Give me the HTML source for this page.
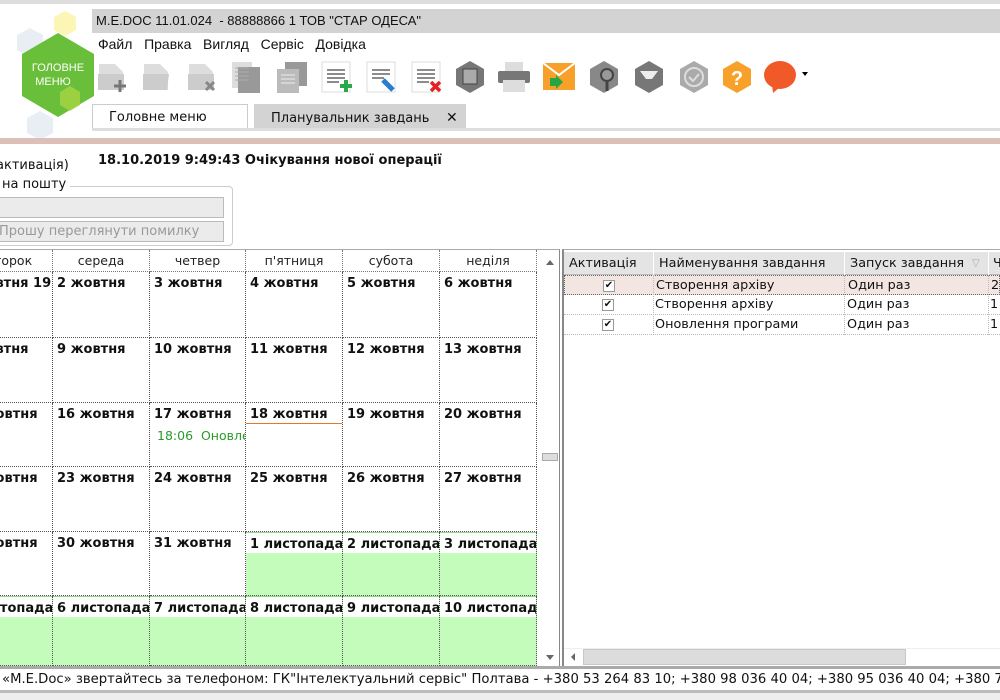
<!DOCTYPE html>
<html><head><meta charset="utf-8">
<style>
*{margin:0;padding:0;box-sizing:border-box}
body{width:1000px;height:700px;position:relative;overflow:hidden;background:#fff;font-family:"DejaVu Sans","Liberation Sans",sans-serif;font-size:12px;color:#111}
.a{position:absolute}
.ico{position:absolute;top:60px;width:34px;height:34px}
.hd{position:absolute;top:250px;height:22px;border-right:1px dotted #777;border-bottom:1px dotted #777;text-align:center;line-height:22px;font-size:12.5px;color:#222}
.c{position:absolute;border-right:1px dotted #555;border-bottom:1px dotted #555;overflow:hidden}
.c b{display:block;height:21px;padding:4px 0 0 4px;font-size:13px;white-space:nowrap;background:#fff}
.g{background:#c3fcbb}
.g b{border-top:1px solid #8fd88a}
.tr{position:absolute;left:564px;width:436px;height:20px;border-bottom:1px dotted #bbb;font-size:12.8px;line-height:19px}
.tr span{position:absolute;top:0}
.chk{position:absolute;left:38px;top:4px;width:12px;height:12px;border:1px solid #999;background:#fff;font-size:10px;line-height:10px;text-align:center;font-weight:bold}
</style></head><body>
<div class="a" style="left:0;top:0;width:1000px;height:4px;background:#ddd"></div>
<svg class="a" style="left:10px;top:8px" width="85" height="135" viewBox="0 0 85 135">
<polygon points="55,3 66,9 66,22 55,28 44,22 44,9" fill="#fbf5b6"/>
<polygon points="20,20 33,27 33,42 20,49 7,42 7,27" fill="#e9eef4"/>
<polygon points="30,103 43,110 43,125 30,132 17,125 17,110" fill="#e9eef4"/>
<polygon points="48,25 84,46 84,88 48,109 12,88 12,46" fill="#6abf3a"/>
<polygon points="60,78 70,84 70,97 60,103 50,97 50,84" fill="#a8d444" opacity=".8"/>
<text x="48" y="63" text-anchor="middle" fill="#fff" font-family="Liberation Sans" font-size="11">ГОЛОВНЕ</text>
<text x="43" y="77" text-anchor="middle" fill="#fff" font-family="Liberation Sans" font-size="11">МЕНЮ</text>
</svg>
<div class="a" style="left:92px;top:9px;width:908px;height:24px;background:#d3d3d3;font-family:'Liberation Sans';font-size:13px;line-height:24px;padding-left:4px">M.E.DOC 11.01.024&nbsp; - 88888866 1 ТОВ "СТАР ОДЕСА"</div>
<div class="a" style="left:98px;top:36px;font-family:'Liberation Sans';font-size:14px;word-spacing:0">Файл&nbsp;&nbsp; Правка&nbsp;&nbsp; Вигляд&nbsp;&nbsp; Сервіс&nbsp;&nbsp; Довідка</div>
<svg class="ico" style="left:96px" viewBox="0 0 34 34"><path d="M3 4h16l8 8v18H3z" fill="#ddd"/><path d="M2 14h26v16H2z" fill="#ccc"/><path d="M24 20v12M18 26h12" stroke="#777" stroke-width="3"/></svg>
<svg class="ico" style="left:141px" viewBox="0 0 34 34"><path d="M3 4h16l8 8v18H3z" fill="#ddd"/><path d="M2 14h26l-2 16H2z" fill="#ccc"/></svg>
<svg class="ico" style="left:186px" viewBox="0 0 34 34"><path d="M3 4h16l8 8v18H3z" fill="#ddd"/><path d="M2 14h26v16H2z" fill="#ccc"/><path d="M20 22l8 8M28 22l-8 8" stroke="#888" stroke-width="3"/></svg>
<svg class="ico" style="left:230px" viewBox="0 0 34 34"><rect x="2" y="2" width="20" height="26" fill="#ddd"/><rect x="8" y="7" width="22" height="26" fill="#999"/><path d="M5 8h14M5 12h14M5 16h14M5 20h14" stroke="#aaa"/></svg>
<svg class="ico" style="left:275px" viewBox="0 0 34 34"><rect x="10" y="2" width="22" height="24" fill="#999"/><rect x="2" y="9" width="22" height="24" fill="#bbb"/><path d="M6 15h14M6 19h14M6 23h14" stroke="#eee"/></svg>
<svg class="ico" style="left:320px" viewBox="0 0 34 34"><rect x="2" y="2" width="28" height="30" fill="#fff" stroke="#ddd"/><path d="M7 10h18M7 14h18M7 18h18M7 22h12" stroke="#666" stroke-width="1.5"/><path d="M26 20v12M20 26h12" stroke="#2aa84a" stroke-width="4"/></svg>
<svg class="ico" style="left:365px" viewBox="0 0 34 34"><rect x="2" y="2" width="28" height="30" fill="#fff" stroke="#ddd"/><path d="M7 10h18M7 14h18M7 18h12" stroke="#666" stroke-width="1.5"/><path d="M18 20l10 10" stroke="#2b7ecf" stroke-width="5"/></svg>
<svg class="ico" style="left:410px" viewBox="0 0 34 34"><rect x="2" y="2" width="28" height="30" fill="#fff" stroke="#ddd"/><path d="M7 10h18M7 14h18M7 18h18M7 22h12" stroke="#666" stroke-width="1.5"/><path d="M21 22l9 9M30 22l-9 9" stroke="#e52222" stroke-width="3.5"/></svg>
<svg class="ico" style="left:453px" viewBox="0 0 34 34"><polygon points="17,1 31,9 31,25 17,33 3,25 3,9" fill="#777"/><rect x="10" y="9" width="14" height="15" fill="#aaa" stroke="#444"/></svg>
<svg class="ico" style="left:497px" viewBox="0 0 34 34"><rect x="8" y="2" width="18" height="10" fill="#ddd"/><rect x="1" y="11" width="32" height="12" rx="2" fill="#777"/><rect x="6" y="20" width="22" height="12" fill="#ddd"/></svg>
<svg class="ico" style="left:542px" viewBox="0 0 34 34"><rect x="1" y="3" width="32" height="27" fill="#f7a12a"/><path d="M1 3l16 12 16-12" stroke="#fff" stroke-width="2" fill="none"/><path d="M8 18l6 0 0-3 7 7-7 7 0-3-6 0z" fill="#27a545"/></svg>
<svg class="ico" style="left:587px" viewBox="0 0 34 34"><polygon points="17,1 31,9 31,25 17,33 3,25 3,9" fill="#888"/><circle cx="20" cy="15" r="6" fill="#999" stroke="#444" stroke-width="2"/><path d="M20 21v10" stroke="#444" stroke-width="3"/></svg>
<svg class="ico" style="left:632px" viewBox="0 0 34 34"><polygon points="17,1 31,9 31,25 17,33 3,25 3,9" fill="#777"/><path d="M8 11h18l-6 8H14z" fill="#eee"/></svg>
<svg class="ico" style="left:677px" viewBox="0 0 34 34"><polygon points="17,1 31,9 31,25 17,33 3,25 3,9" fill="#aaa"/><circle cx="17" cy="17" r="9" fill="none" stroke="#ddd" stroke-width="2"/><path d="M12 17l4 4 6-7" stroke="#ddd" stroke-width="2" fill="none"/></svg>
<svg class="ico" style="left:720px" viewBox="0 0 34 34"><polygon points="17,1 31,9 31,25 17,33 3,25 3,9" fill="#f7a12a"/><text x="17" y="25" text-anchor="middle" fill="#fff" font-weight="bold" font-size="20" font-family="Liberation Sans">?</text></svg>
<svg class="ico" style="left:763px" viewBox="0 0 34 34"><ellipse cx="17" cy="15" rx="16" ry="14" fill="#f05a28"/><path d="M9 25l1 8 7-6z" fill="#f05a28"/></svg>
<div class="a" style="left:802px;top:72px;width:0;height:0;border-left:3px solid transparent;border-right:3px solid transparent;border-top:4px solid #000"></div>
<div class="a" style="left:92px;top:104px;width:156px;height:25px;border:1px solid #ccc;border-bottom:none;font-size:13px;line-height:26px;padding-left:16px">Головне меню</div>
<div class="a" style="left:254px;top:104px;width:212px;height:25px;background:#d3d3d3;font-size:13px;line-height:28px;padding-left:17px">Планувальник завдань&nbsp;&nbsp;&nbsp; <span style="font-size:14px">✕</span></div>
<div class="a" style="left:92px;top:128px;width:908px;height:3px;background:#ddd"></div>
<div class="a" style="left:0;top:138px;width:1000px;height:6px;background:#dcbfb7"></div>
<div class="a" style="left:-4px;top:158px;font-size:13px">активація)</div>
<div class="a" style="left:98px;top:153px;font-size:13px;font-weight:bold">18.10.2019 9:49:43 Очікування нової операції</div>
<div class="a" style="left:-10px;top:186px;width:243px;height:60px;border:1px solid #ccc;border-radius:4px"></div>
<div class="a" style="left:-2px;top:177px;background:#fff;font-size:13px;padding:0 4px">на пошту</div>
<div class="a" style="left:-2px;top:197px;width:226px;height:21px;background:#ebebeb;border:1px solid #bbb"></div>
<div class="a" style="left:-2px;top:221px;width:226px;height:21px;background:#ebebeb;border:1px solid #bbb;color:#999;font-size:13px;line-height:19px">Прошу переглянути помилку</div>
<div class="a" style="left:0;top:249px;width:560px;height:418px;border-top:1px solid #aaa;border-right:1px solid #888"></div>
<div class="hd" style="left:-44px;width:97px">вівторок</div>
<div class="hd" style="left:53px;width:97px">середа</div>
<div class="hd" style="left:150px;width:96px">четвер</div>
<div class="hd" style="left:246px;width:97px">п'ятниця</div>
<div class="hd" style="left:343px;width:97px">субота</div>
<div class="hd" style="left:440px;width:97px">неділя</div>
<div id="cal"></div>
<div class="a" style="left:540px;top:250px;width:19px;height:416px;background:#fff"></div>
<div class="a" style="left:546px;top:260px;border-left:4px solid transparent;border-right:4px solid transparent;border-bottom:5px solid #666"></div>
<div class="a" style="left:546px;top:655px;border-left:4px solid transparent;border-right:4px solid transparent;border-top:5px solid #666"></div>
<div class="a" style="left:542px;top:453px;width:16px;height:8px;background:#ddd;border:1px solid #aaa"></div>
<div class="a" style="left:562px;top:249px;width:438px;height:418px;border-left:2px solid #888;border-top:1px solid #aaa"></div>
<div class="a" style="left:564px;top:252px;width:436px;height:23px;background:#e4e4e4;border-bottom:1px solid #bbb;font-size:12.8px;line-height:23px">
<span class="a" style="left:5px">Активація</span><span class="a" style="left:89px;top:0;height:23px;border-left:1px solid #fff"></span>
<span class="a" style="left:95px">Найменування завдання</span><span class="a" style="left:280px;top:0;height:23px;border-left:1px solid #fff"></span>
<span class="a" style="left:286px">Запуск завдання</span><span class="a" style="left:408px;color:#aaa;font-size:10px">▽</span><span class="a" style="left:424px;top:0;height:23px;border-left:1px solid #fff"></span>
<span class="a" style="left:429px">Ч</span></div>
<div class="tr" style="top:275px;background:#f3e5e2;border:1px dotted #666"><div class="chk">✔</div><span style="left:91px">Створення архіву</span><span style="left:283px">Один раз</span><span style="left:426px">2</span></div>
<div class="tr" style="top:295px"><div class="chk">✔</div><span style="left:91px">Створення архіву</span><span style="left:283px">Один раз</span><span style="left:426px">1</span></div>
<div class="tr" style="top:315px"><div class="chk">✔</div><span style="left:91px">Оновлення програми</span><span style="left:283px">Один раз</span><span style="left:426px">1</span></div>
<div class="a" style="left:653px;top:275px;height:60px;border-left:1px dotted #bbb"></div>
<div class="a" style="left:844px;top:275px;height:60px;border-left:1px dotted #bbb"></div>
<div class="a" style="left:988px;top:275px;height:60px;border-left:1px dotted #bbb"></div>
<div class="a" style="left:564px;top:648px;width:436px;height:18px;border-top:1px solid #eee"></div>
<div class="a" style="left:571px;top:653px;border-top:4px solid transparent;border-bottom:4px solid transparent;border-right:4px solid #666"></div>
<div class="a" style="left:583px;top:649px;width:323px;height:16px;background:#dcdcdc;border:1px solid #c8c8c8"></div>
<div class="a" style="left:0;top:666px;width:1000px;height:3px;background:#aaa"></div>
<div class="a" style="left:0;top:669px;width:1000px;height:21px;font-size:13.2px;line-height:21px;white-space:nowrap;padding-left:2px">«M.E.Doc» звертайтесь за телефоном: ГК"Інтелектуальний сервіс" Полтава - +380 53 264 83 10; +380 98 036 40 04; +380 95 036 40 04; +380 73</div>
<div class="a" style="left:0;top:690px;width:1000px;height:3px;background:#bbb"></div>
<div class="a" style="left:0;top:693px;width:1000px;height:7px;background:#eee"></div>
<script>
var xs=[-44,53,150,246,343,440,537],ys=[272,338,403,467,532,596,666];
var L=[["1 жовтня 19","2 жовтня","3 жовтня","4 жовтня","5 жовтня","6 жовтня"],
["8 жовтня","9 жовтня","10 жовтня","11 жовтня","12 жовтня","13 жовтня"],
["15 жовтня","16 жовтня","17 жовтня","18 жовтня","19 жовтня","20 жовтня"],
["22 жовтня","23 жовтня","24 жовтня","25 жовтня","26 жовтня","27 жовтня"],
["29 жовтня","30 жовтня","31 жовтня","1 листопада","2 листопада","3 листопада"],
["5 листопада","6 листопада","7 листопада","8 листопада","9 листопада","10 листопада"]];
var h="";
for(var r=0;r<6;r++)for(var c=0;c<6;c++){
var g=(r==5)||(r==4&&c>=3);
var extra="";
if(r==2&&c==3)extra=' style="border-bottom:1px solid #e07a2a"';
h+='<div class="c'+(g?' g':'')+'" style="left:'+xs[c]+'px;top:'+ys[r]+'px;width:'+(xs[c+1]-xs[c])+'px;height:'+(ys[r+1]-ys[r])+'px"><b'+extra+'>'+L[r][c]+'</b>'+
(r==2&&c==2?'<div style="padding:4px 0 0 7px;color:#2a9a2a;font-size:12.5px;white-space:nowrap">18:06&nbsp; Оновлення</div>':'')+'</div>';}
document.getElementById('cal').innerHTML=h;
</script>
</body></html>
